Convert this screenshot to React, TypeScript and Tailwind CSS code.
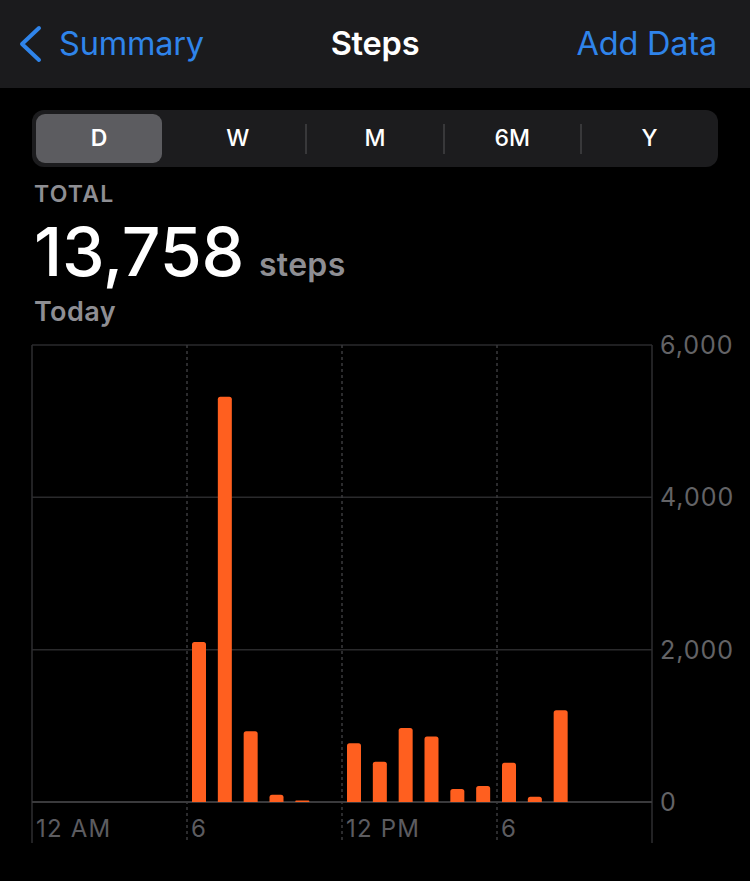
const hours: { h: number; v: number }[] = [
  { h: 6, v: 2100 },
  { h: 7, v: 5320 },
  { h: 8, v: 930 },
  { h: 9, v: 95 },
  { h: 10, v: 15 },
  { h: 12, v: 770 },
  { h: 13, v: 530 },
  { h: 14, v: 970 },
  { h: 15, v: 860 },
  { h: 16, v: 170 },
  { h: 17, v: 210 },
  { h: 18, v: 515 },
  { h: 19, v: 68 },
  { h: 20, v: 1205 },
];

const segments = ['D', 'W', 'M', '6M', 'Y'];

// chart geometry, in page pixels
const LEFT = 32;
const RIGHT = 652;
const TOP = 345;
const BASE = 802;
const HOUR = (RIGHT - LEFT) / 24;

function barPath(x: number, top: number, w: number) {
  const r = Math.min(2.5, (BASE - top) / 2);
  return `M${x} ${BASE} V${top + r} Q${x} ${top} ${x + r} ${top} H${x + w - r} Q${x + w} ${top} ${x + w} ${top + r} V${BASE} Z`;
}

function StepsChart() {
  const scale = (BASE - TOP) / 6000;
  const grid = [345, 497.3, 649.7];
  const ticks = [
    { y: 345, label: '6,000' },
    { y: 497.3, label: '4,000' },
    { y: 649.7, label: '2,000' },
    { y: 802, label: '0' },
  ];
  const xlabels = [
    { x: LEFT, label: '12 AM', dashed: false },
    { x: LEFT + HOUR * 6, label: '6', dashed: true },
    { x: LEFT + HOUR * 12, label: '12 PM', dashed: true },
    { x: LEFT + HOUR * 18, label: '6', dashed: true },
  ];
  return (
    <svg width="750" height="520" viewBox="0 330 750 520" className="block">
      {grid.map((y) => (
        <line key={y} x1={LEFT} x2={RIGHT} y1={y} y2={y} stroke="#2a2a2c" strokeWidth="1.5" />
      ))}
      {xlabels.map((l) => (
        <line
          key={l.x}
          x1={l.x}
          x2={l.x}
          y1={TOP}
          y2={843}
          stroke={l.dashed ? '#3a3a3c' : '#2e2e30'}
          strokeWidth="1.5"
          strokeDasharray={l.dashed ? '3 3' : undefined}
        />
      ))}
      <line x1={RIGHT} x2={RIGHT} y1={TOP} y2={843} stroke="#2e2e30" strokeWidth="1.5" />
      <line x1={LEFT} x2={RIGHT} y1={BASE} y2={BASE} stroke="#3a3a3c" strokeWidth="2" />
      {hours.map((b) => {
        const x = LEFT + b.h * HOUR + 5;
        const top = BASE - Math.max(1.5, b.v * scale);
        return <path key={b.h} d={barPath(x, top, 14)} fill="#ff5f1f" />;
      })}
      {ticks.map((t) => (
        <text
          key={t.label}
          x={660}
          y={t.y + 9}
          fill="#636366"
          fontSize="25"
          letterSpacing="1"
          fontFamily="Inter, sans-serif"
        >
          {t.label}
        </text>
      ))}
      {xlabels.map((l) => (
        <text
          key={l.x}
          x={l.x + 4}
          y={837}
          fill="#5c5c60"
          fontSize="24"
          letterSpacing="1.2"
          fontFamily="Inter, sans-serif"
        >
          {l.label}
        </text>
      ))}
    </svg>
  );
}

export default function App() {
  return (
    <div className="w-[750px] h-[881px] bg-black overflow-hidden font-['Inter',sans-serif]">
      {/* nav bar */}
      <div className="h-[88px] bg-[#1b1b1d] grid grid-cols-3 items-center px-[18px]">
        <div className="flex items-center gap-[17px] text-[#2f84ea]">
          <svg width="24" height="38" viewBox="0 0 24 38" className="shrink-0">
            <path d="M21 3 L4 19 L21 35" fill="none" stroke="#2f84ea" strokeWidth="4" strokeLinecap="round" strokeLinejoin="round" />
          </svg>
          <span className="text-[32.5px] leading-[38px] tracking-[-0.2px] whitespace-nowrap">Summary</span>
        </div>
        <div className="text-center text-white text-[32.5px] leading-[38px] font-semibold tracking-[-0.2px]">Steps</div>
        <div className="text-right pr-[15px] text-[#2f84ea] text-[32.5px] leading-[38px] tracking-[-0.2px] whitespace-nowrap">Add Data</div>
      </div>

      {/* period picker */}
      <div className="mt-[22px] mx-[32px] h-[57px] rounded-[12px] bg-[#1c1c1e] flex">
        {segments.map((s, i) => (
          <div key={s} className="flex-1 flex items-center">
            {i > 1 && <div className="w-[2px] h-[30px] bg-[#38383a] -ml-[1px] -mr-[1px]" />}
            <div
              className={
                i === 0
                  ? 'flex-1 self-stretch my-[4px] ml-[4px] mr-[7px] rounded-[9px] bg-[#5c5c60] flex items-center justify-center text-white text-[23px] font-semibold'
                  : 'flex-1 self-stretch flex items-center justify-center text-white text-[23px] font-medium'
              }
            >
              {s}
            </div>
          </div>
        ))}
      </div>

      {/* totals */}
      <div className="h-[163px] px-[34px]">
        <div className="pt-[16px] text-[23px] leading-[22px] font-semibold text-[#8e8e93] tracking-[1.2px]">TOTAL</div>
        <div className="mt-[13px] flex items-baseline">
          <span className="text-[68px] leading-[66px] font-medium text-white tracking-[-0.3px]">13,758</span>
          <span className="ml-[15px] text-[32px] leading-[31px] font-semibold text-[#8e8e93] tracking-[0.3px]">steps</span>
        </div>
        <div className="mt-[15px] text-[27px] leading-[26px] font-semibold text-[#8e8e93] tracking-[0.4px]">Today</div>
      </div>

      <StepsChart />
    </div>
  );
}
